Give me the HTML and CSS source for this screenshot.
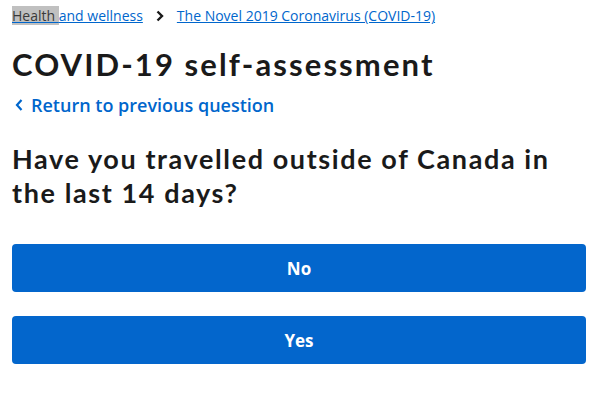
FILE: index.html
```html
<!DOCTYPE html>
<html lang="en">

<head>
    <meta charset="UTF-8">
    <meta name="viewport" content="width=device-width, initial-scale=1.0">
    <title>COVID-19 self-assessment</title>
    <link rel="stylesheet" href="styles.css">
</head>

<body>
    <div class="page">
        <nav class="breadcrumbs">
            <a href="#"><span class="selected">Health </span>and wellness</a>
            <svg class="crumb-arrow" width="10" height="12" viewBox="0 0 10 12" aria-hidden="true">
                <path d="M2.5 1.5 L7 6 L2.5 10.5" fill="none" stroke="#1a1a1a" stroke-width="2.4" />
            </svg>
            <a href="#">The Novel 2019 Coronavirus (COVID-19)</a>
        </nav>

        <h1>COVID-19 self-assessment</h1>

        <a href="#" class="back-link">
            <svg width="10" height="14" viewBox="0 0 10 14" aria-hidden="true">
                <path d="M7.5 2 L3 7 L7.5 12" fill="none" stroke="#0066cc" stroke-width="2.2" />
            </svg>
            Return to previous question
        </a>

        <h2 class="question">Have you travelled outside of Canada in<br>the last 14 days?</h2>

        <div class="answers">
            <button class="answer-button">No</button>
            <button class="answer-button">Yes</button>
        </div>
    </div>
</body>

</html>
```

FILE: styles.css
```css
body {
    margin: 0;
    font-family: 'Open Sans', sans-serif;
    color: #1a1a1a;
    background-color: #fff;
}

.page {
    padding: 6px 20px 0 12px;
}

.breadcrumbs {
    display: flex;
    align-items: center;
    font-size: 14px;
    line-height: 20px;
}

.breadcrumbs a {
    color: #0066cc;
}

.selected {
    background-color: #c0c0c0;
    color: #3a3a3a;
}

.crumb-arrow {
    margin: 0 12px 0 12px;
}

h1 {
    font-family: 'Lato', sans-serif;
    font-weight: 700;
    font-size: 31px;
    letter-spacing: 2.1px;
    line-height: 40px;
    margin: 18px 0 8px 0;
}

.back-link {
    display: flex;
    align-items: center;
    gap: 7px;
    color: #0066cc;
    text-decoration: none;
    font-size: 18px;
    font-weight: 600;
    line-height: 26px;
}

.back-link svg {
    margin-left: 2px;
}

.question {
    font-family: 'Lato', sans-serif;
    font-weight: 700;
    font-size: 27px;
    letter-spacing: 1.6px;
    line-height: 34px;
    margin: 24px 0 0 0;
}

.answers {
    display: flex;
    flex-direction: column;
    gap: 24px;
    margin-top: 34px;
}

.answer-button {
    height: 48px;
    border: none;
    border-radius: 4px;
    background-color: #0366cc;
    color: #fff;
    font-family: 'Open Sans', sans-serif;
    font-size: 17px;
    font-weight: 700;
    cursor: pointer;
}
```
